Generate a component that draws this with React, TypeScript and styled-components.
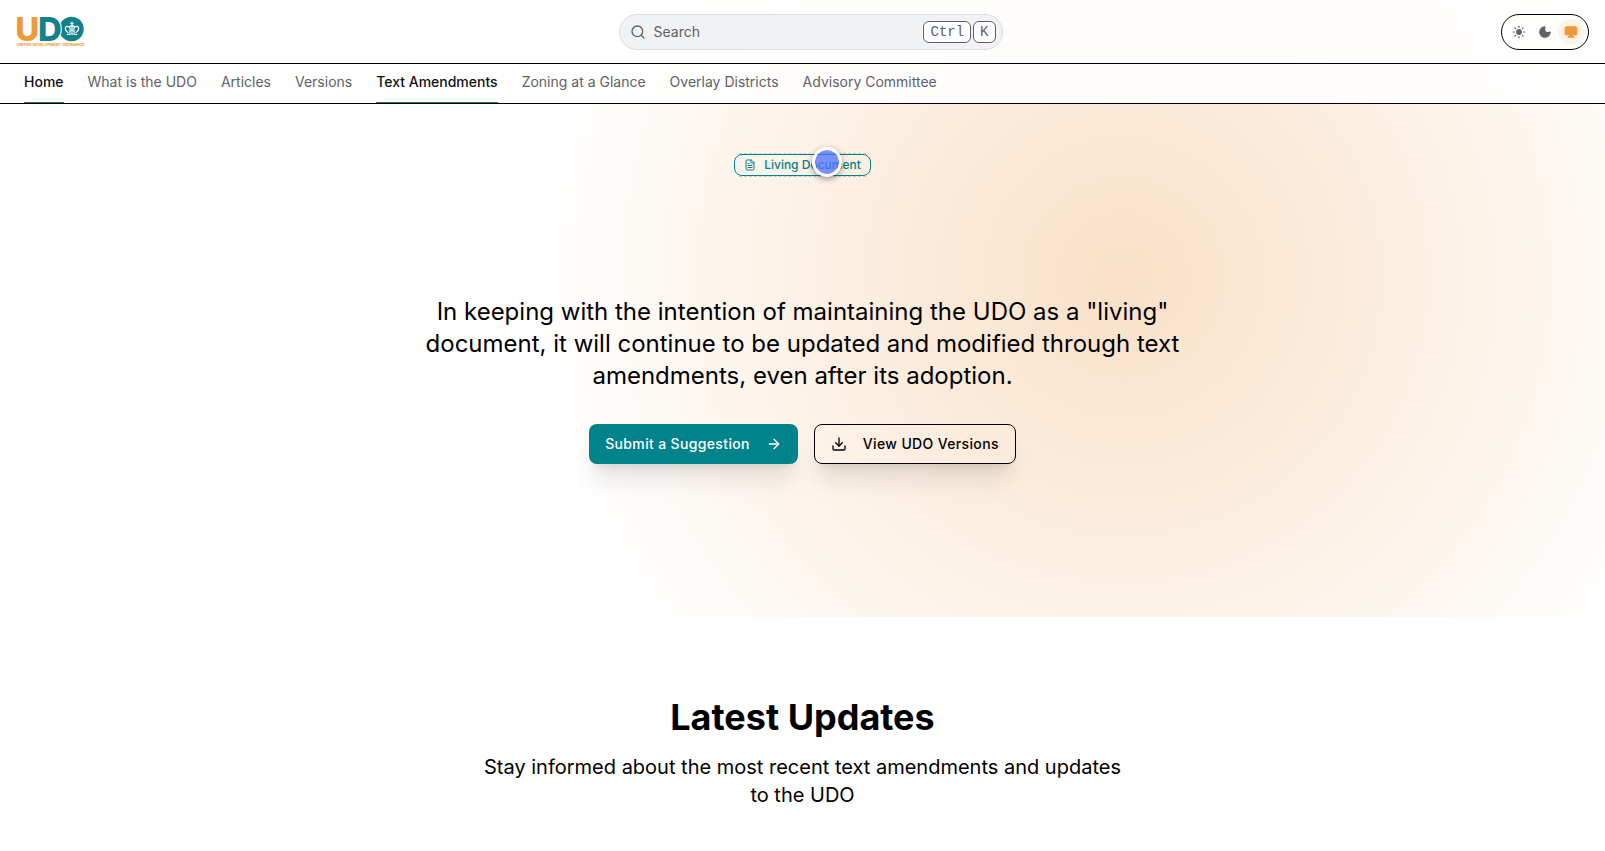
import React from "react";
import styled, { createGlobalStyle, css } from "styled-components";
import { Airplay, ArrowRight, Download, FileText, Moon, Search, Sun } from "lucide-react";

const teal = "#00838a";
const logoTeal = "#14808a";
const orange = "#ee9a3a";
const muted = "#5f6166";

const GlobalStyle = createGlobalStyle`
  *, *::before, *::after { box-sizing: border-box; }
  body {
    margin: 0;
    background: #fff;
    color: #000;
    font-family: Inter, "Liberation Sans", sans-serif;
    font-size: 16px;
    font-optical-sizing: none;
  }
  a { color: inherit; text-decoration: none; }
  h2, p { margin: 0; }
`;

const Top = styled.div`
  background: radial-gradient(
    circle at 70% 45%,
    rgba(236, 150, 62, 0.29),
    rgba(236, 150, 62, 0) 50%
  );
`;

const Header = styled.header`
  position: sticky;
  top: 0;
  z-index: 1;
  background: rgba(255, 255, 255, 0.88);
`;

const Bar = styled.div`
  display: flex;
  align-items: center;
  justify-content: space-between;
  height: 64px;
  padding: 0 16px;
  border-bottom: 1px solid #000;
`;

const LogoLink = styled.a`
  display: flex;
  width: 104px;
`;

const SearchBox = styled.label`
  display: flex;
  align-items: center;
  gap: 8px;
  width: 384px;
  height: 36px;
  padding: 0 6px 0 10px;
  border: 1px solid #dedede;
  border-radius: 18px;
  background: #f1f2f4;
  color: ${muted};
`;

const SearchInput = styled.input`
  flex: 1;
  min-width: 0;
  padding: 0;
  border: 0;
  outline: 0;
  background: transparent;
  color: inherit;
  font: inherit;
  font-size: 14px;
  line-height: 20px;
  &::placeholder { color: inherit; opacity: 1; }
`;

const Keys = styled.span`
  display: flex;
  gap: 2px;
`;

const Key = styled.kbd`
  padding: 0 6px;
  border: 1px solid ${muted};
  border-radius: 6px;
  background: #fff;
  font-family: "Liberation Mono", monospace;
  font-size: 14px;
  line-height: 20px;
`;

const ThemeSwitch = styled.div`
  display: flex;
  padding: 4px;
  border: 1px solid #000;
  border-radius: 18px;
`;

const ThemeButton = styled.button<{ $active?: boolean }>`
  display: grid;
  place-items: center;
  width: 26px;
  height: 26px;
  padding: 0;
  border: 0;
  border-radius: 50%;
  background: ${(p) => (p.$active ? "#fef3e8" : "transparent")};
  color: ${(p) => (p.$active ? orange : muted)};
`;

const Nav = styled.nav`
  display: flex;
  gap: 24px;
  height: 40px;
  padding: 0 24px;
  border-bottom: 1px solid #000;
`;

const NavLink = styled.a<{ $active?: boolean }>`
  padding-top: 8px;
  border-bottom: 1px solid transparent;
  color: ${muted};
  font-size: 14px;
  line-height: 20px;
  white-space: nowrap;
  ${(p) =>
    p.$active &&
    css`
      border-color: #2d7265;
      color: #111;
      font-weight: 500;
    `}
`;

const Hero = styled.section`
  display: flex;
  flex-direction: column;
  align-items: center;
  padding: 50px 16px 153px;
  text-align: center;
`;

const Badge = styled.div`
  position: relative;
  display: flex;
  align-items: center;
  gap: 8px;
  height: 22px;
  margin-bottom: 120px;
  padding: 0 9px;
  border: 1px solid ${teal};
  border-radius: 8px;
  color: ${teal};
  font-size: 12px;
  font-weight: 500;
  line-height: 16px;
  &::before {
    content: "";
    position: absolute;
    inset: -2px 4px;
    border: dashed rgba(0, 131, 138, 0.3);
    border-width: 1px 0;
  }
`;

const Pointer = styled.span`
  position: absolute;
  top: -8px;
  right: 28px;
  width: 30px;
  height: 30px;
  border: 3px solid #fff;
  border-radius: 50%;
  background: rgba(80, 115, 255, 0.76);
  background-clip: padding-box;
  box-shadow: 0 2px 6px rgba(0, 0, 0, 0.4);
`;

const Lead = styled.p`
  max-width: 768px;
  font-size: 24px;
  line-height: 32px;
`;

const Actions = styled.div`
  display: flex;
  gap: 16px;
  margin-top: 32px;
`;

const Action = styled.a<{ $primary?: boolean }>`
  display: flex;
  align-items: center;
  gap: 16px;
  height: 40px;
  padding: 0 16px;
  border: ${(p) => (p.$primary ? "0" : "1px solid #000")};
  border-radius: 8px;
  background: ${(p) => (p.$primary ? teal : "transparent")};
  box-shadow: 0 20px 25px -5px rgba(0, 0, 0, 0.1), 0 8px 10px -6px rgba(0, 0, 0, 0.1);
  color: ${(p) => (p.$primary ? "#fff" : "#000")};
  font-size: 14px;
  font-weight: 500;
  line-height: 20px;
  letter-spacing: 0.025em;
`;

const Updates = styled.section`
  display: flex;
  flex-direction: column;
  align-items: center;
  padding: 80px 16px 40px;
  text-align: center;
`;

const Title = styled.h2`
  font-size: 36px;
  font-weight: 700;
  line-height: 40px;
`;

const Summary = styled.p`
  max-width: 656px;
  margin-top: 16px;
  font-size: 20px;
  line-height: 28px;
`;

const navItems = [
  { label: "Home", active: true },
  { label: "What is the UDO" },
  { label: "Articles" },
  { label: "Versions" },
  { label: "Text Amendments", active: true },
  { label: "Zoning at a Glance" },
  { label: "Overlay Districts" },
  { label: "Advisory Committee" },
];

const themes = [
  { name: "Light theme", Icon: Sun },
  { name: "Dark theme", Icon: Moon },
  { name: "System theme", Icon: Airplay, active: true },
];

function Logo() {
  return (
    <svg width="72" height="48" viewBox="0 0 288 192" role="img" aria-label="UDO">
      <circle cx="222" cy="84" r="49" fill={logoTeal} />
      <g fontFamily="Inter, sans-serif" fontWeight="800" fontSize="132">
        <text x="-3" y="133" fill={orange}>U</text>
        <text x="88" y="133" fill={logoTeal} stroke="#fff" strokeWidth="9" paintOrder="stroke">D</text>
      </g>
      <g fill="none" stroke="#fff" strokeWidth="5" strokeLinecap="round" strokeLinejoin="round">
        <path d="M208 98 C194 90 194 72 207 74 C218 75 219 86 215 97" />
        <path d="M240 98 C254 90 254 72 241 74 C230 75 229 86 233 97" />
        <path d="M224 97 V74 M214 74 Q224 67 234 74" />
        <path d="M205 106 Q224 101 243 106 M224 67 V56 M219 61 H229" />
      </g>
      <text x="3" y="153" fill={orange} fontFamily="Inter, sans-serif" fontWeight="700" fontSize="15">
        UNIFIED DEVELOPMENT ORDINANCE
      </text>
    </svg>
  );
}

export default function App() {
  return (
    <>
      <GlobalStyle />
      <Top>
        <Header>
          <Bar>
            <LogoLink href="#home"><Logo /></LogoLink>
            <SearchBox>
              <Search size={16} />
              <SearchInput type="search" placeholder="Search" aria-label="Search" />
              <Keys><Key>Ctrl</Key><Key>K</Key></Keys>
            </SearchBox>
            <ThemeSwitch role="group" aria-label="Theme">
              {themes.map(({ name, Icon, active }) => (
                <ThemeButton key={name} type="button" aria-label={name} aria-pressed={!!active} $active={active}>
                  <Icon size={14} fill="currentColor" />
                </ThemeButton>
              ))}
            </ThemeSwitch>
          </Bar>
          <Nav>
            {navItems.map((item) => (
              <NavLink key={item.label} href="#" $active={item.active}>{item.label}</NavLink>
            ))}
          </Nav>
        </Header>
        <Hero>
          <Badge>
            <FileText size={12} />
            Living Document
            <Pointer />
          </Badge>
          <Lead>
            In keeping with the intention of maintaining the UDO as a "living" document, it will
            continue to be updated and modified through text amendments, even after its adoption.
          </Lead>
          <Actions>
            <Action href="#suggest" $primary>Submit a Suggestion<ArrowRight size={16} /></Action>
            <Action href="#versions"><Download size={16} />View UDO Versions</Action>
          </Actions>
        </Hero>
      </Top>
      <Updates>
        <Title>Latest Updates</Title>
        <Summary>Stay informed about the most recent text amendments and updates to the UDO</Summary>
      </Updates>
    </>
  );
}
